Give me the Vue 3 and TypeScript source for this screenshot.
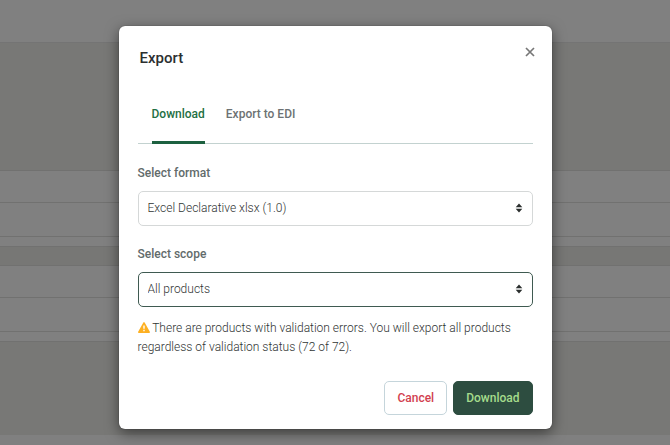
<script setup lang="ts">
import { ref } from 'vue'

type Tab = { id: string; label: string }

const tabs: Tab[] = [
  { id: 'download', label: 'Download' },
  { id: 'edi', label: 'Export to EDI' },
]
const activeTab = ref('download')
const format = ref('xlsx')
const scope = ref('all')
</script>

<template>
  <div class="page">
    <div class="backdrop" aria-hidden="true">
      <div class="band top"></div>
      <div class="band panel"></div>
      <div class="band row"></div>
      <div class="band row last"></div>
      <div class="band gap"></div>
      <div class="band heading"></div>
      <div class="band row"></div>
      <div class="band row last"></div>
      <div class="band gap"></div>
      <div class="band footer-panel"></div>
      <div class="band rest"></div>
    </div>

    <section class="dialog" role="dialog" aria-modal="true" aria-labelledby="export-title">
      <header class="header">
        <h2 id="export-title">Export</h2>
        <button class="close" type="button" aria-label="Close">
          <svg viewBox="0 0 14 14" width="14" height="14">
            <path d="M3 3L11 11M11 3L3 11" fill="none" stroke="#777" stroke-width="1.7" />
          </svg>
        </button>
      </header>

      <form class="body" @submit.prevent>
        <nav class="tabs" role="tablist">
          <button
            v-for="tab in tabs"
            :key="tab.id"
            type="button"
            role="tab"
            class="tab"
            :class="{ active: tab.id === activeTab }"
            :aria-selected="tab.id === activeTab"
            @click="activeTab = tab.id"
          >{{ tab.label }}</button>
        </nav>

        <div class="field">
          <label for="format">Select format</label>
          <div class="control">
            <select id="format" v-model="format">
              <option value="xlsx">Excel Declarative xlsx (1.0)</option>
            </select>
            <svg class="arrows" viewBox="0 0 8 10" width="8" height="10">
              <path d="M4 0.5L7.3 4.2H0.7ZM4 9.5L0.7 5.8H7.3Z" fill="#2b2f2e" />
            </svg>
          </div>
        </div>

        <div class="field">
          <label for="scope">Select scope</label>
          <div class="control">
            <select id="scope" v-model="scope" class="focused">
              <option value="all">All products</option>
            </select>
            <svg class="arrows" viewBox="0 0 8 10" width="8" height="10">
              <path d="M4 0.5L7.3 4.2H0.7ZM4 9.5L0.7 5.8H7.3Z" fill="#2b2f2e" />
            </svg>
          </div>
        </div>

        <p class="message">
          <svg class="warning" viewBox="0 0 12 11" width="12" height="11">
            <path d="M6 0.9L11.2 10.2H0.8Z" fill="#fdb022" stroke="#fdb022" stroke-width="1.5" stroke-linejoin="round" />
            <path d="M6 3.4V6.8M6 7.8V9.3" fill="none" stroke="#fff" stroke-width="1.4" />
          </svg>
          There are products with validation errors. You will export all products regardless of validation status (72 of 72).
        </p>

        <footer class="actions">
          <button class="button cancel" type="button">Cancel</button>
          <button class="button primary" type="submit">Download</button>
        </footer>
      </form>
    </section>
  </div>
</template>

<style>
body {
  margin: 0;
  background: #808080;
}
</style>

<style scoped>
.page {
  display: grid;
  min-height: 100vh;
  font-family: Roboto, "Liberation Sans", sans-serif;
  font-size: 12px;
  line-height: 18px;
  color: #303433;
}

.backdrop,
.dialog {
  grid-area: 1 / 1;
}

.backdrop {
  display: flex;
  flex-direction: column;
}

.band {
  box-sizing: border-box;
  border-bottom: 1px solid #717170;
}

.top {
  height: 43px;
  border-color: #747474;
}

.panel {
  height: 128px;
  background: #787876;
}

.row {
  height: 32px;
}

.row.last {
  height: 34px;
}

.gap {
  height: 10px;
}

.heading {
  height: 19px;
  background: #777775;
}

.footer-panel {
  height: 93px;
  background: #787876;
  border: 0;
}

.rest {
  flex: 1;
  border: 0;
}

.dialog {
  align-self: start;
  justify-self: center;
  box-sizing: border-box;
  width: calc(100% - 32px);
  max-width: 433px;
  margin: 26px 0 16px;
  background: #fff;
  border-radius: 6px;
  box-shadow: 0 0 1px rgba(0, 0, 0, 0.6), 0 4px 14px rgba(0, 0, 0, 0.5);
}

.header {
  display: flex;
  align-items: flex-start;
  justify-content: space-between;
  padding: 19px 15px 0 21px;
}

h2 {
  margin: 0;
  font-size: 15px;
  font-weight: 500;
  line-height: 26px;
  color: #2c2f30;
}

button {
  font: inherit;
  cursor: pointer;
}

.close {
  display: flex;
  padding: 0;
  border: 0;
  background: none;
}

.body {
  padding: 0 19px 14px;
}

.tabs {
  display: flex;
  gap: 21px;
  margin-top: 34px;
  padding: 0 14px;
  border-bottom: 1px solid #c3d2d0;
}

.tab {
  margin: 0 0 -1px;
  padding: 0 0 18px;
  border: 0;
  border-bottom: 3px solid transparent;
  background: none;
  font-weight: 500;
  color: #6d7273;
}

.tab.active {
  border-color: #1d6140;
  color: #1f7044;
}

.field {
  margin-top: 20px;
}

.field + .field {
  margin-top: 19px;
}

label {
  display: block;
  margin-bottom: 9px;
  font-weight: 500;
  color: #626b6b;
}

.control {
  position: relative;
}

select {
  display: block;
  box-sizing: border-box;
  width: 100%;
  height: 35px;
  padding: 0 32px 2px 9px;
  appearance: none;
  border: 1px solid #d5d8d8;
  border-radius: 5px;
  background: #fff;
  font: inherit;
  font-weight: 300;
  color: #303433;
}

select.focused {
  border-color: #3f5a51;
}

.arrows {
  position: absolute;
  top: 12px;
  right: 10px;
  pointer-events: none;
}

.message {
  margin: 12px 0 24px;
  font-weight: 300;
  line-height: 19px;
}

.warning {
  vertical-align: -1px;
}

.actions {
  display: flex;
  justify-content: flex-end;
  gap: 6px;
}

.button {
  height: 34px;
  padding: 0 12px;
  border: 1px solid #c5d5db;
  border-radius: 5px;
  font-weight: 500;
}

.cancel {
  background: #fff;
  color: #d23f50;
}

.primary {
  border-color: #2d4d40;
  background: #2d4d40;
  color: #a5dc8c;
}
</style>
